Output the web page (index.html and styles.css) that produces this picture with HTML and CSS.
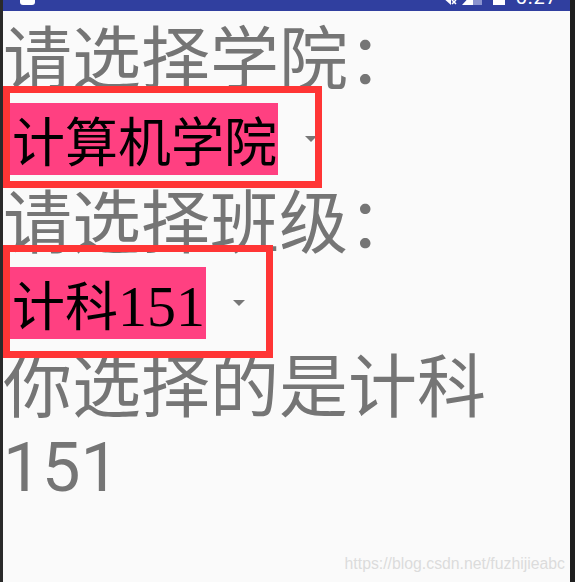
FILE: index.html
```html
<!DOCTYPE html>
<html lang="zh-CN">
<head>
<meta charset="utf-8">
<title>Spinner</title>
<link rel="stylesheet" href="styles.css">
</head>
<body>
<div class="device">
  <div class="edge edge-left"></div>
  <div class="screen">
    <div class="statusbar">
      <div class="status-row">
        <span class="notif"></span>
        <span class="status-spacer"></span>
        <svg class="ico-wifi" width="15" height="16" viewBox="0 0 15 16">
          <path d="M0 8 L9 16 L9 8 Z" fill="#fff"/>
          <path d="M10 11 L14 15 M14 11 L10 15" stroke="#fff" stroke-width="1.5"/>
        </svg>
        <svg class="ico-signal" width="20" height="16" viewBox="0 0 20 16">
          <path d="M0 16 L11 16 L11 4 Z" fill="#fff"/>
          <path d="M11 16 L20 16 L20 0 L11 4 Z" fill="#8a93cf"/>
        </svg>
        <span class="battery"></span>
        <span class="clock">5:27</span>
      </div>
    </div>
    <main class="content">
      <div class="label">请选择学院：</div>
      <div class="spinner-wrap">
        <div class="spinner">
          <span class="spinner-text">计算机学院</span>
          <span class="caret"></span>
        </div>
        <div class="mark mark-1"></div>
      </div>
      <div class="label">请选择班级：</div>
      <div class="spinner-wrap">
        <div class="spinner">
          <span class="spinner-text">计科<span class="num">151</span></span>
          <span class="caret"></span>
        </div>
        <div class="mark mark-2"></div>
      </div>
      <div class="label result">你选择的是计科151</div>
    </main>
    <div class="watermark">https://blog.csdn.net/fuzhijieabc</div>
  </div>
  <div class="edge edge-right"></div>
</div>
</body>
</html>
```
FILE: styles.css
```css
* { box-sizing: border-box; }
html, body {
  margin: 0;
  padding: 0;
  width: 575px;
  height: 582px;
  overflow: hidden;
  background: #fafafa;
}
.device {
  display: flex;
  width: 575px;
  height: 582px;
}
.edge { flex: none; height: 100%; }
.edge-left { width: 3px; background: #2a2a2a; }
.edge-right { width: 5px; background: #1f1f1f; }
.screen {
  position: relative;
  flex: 1;
  min-width: 0;
  background: #fafafa;
  display: flex;
  flex-direction: column;
}
.statusbar {
  height: 11px;
  background: #303f9f;
  overflow: hidden;
  flex: none;
}
.status-row {
  display: flex;
  align-items: flex-end;
  height: 16px;
  margin-top: -11px;
  padding: 0 12px 0 17px;
}
.notif {
  width: 15px;
  height: 14px;
  background: #fff;
  border-radius: 3px;
}
.status-spacer { flex: 1; }
.ico-wifi { display: block; margin-right: 5px; }
.ico-signal { display: block; margin-right: 11px; }
.battery {
  width: 12px;
  height: 14px;
  background: #fff;
  margin-right: 10px;
}
.clock {
  font-family: Roboto, sans-serif;
  font-size: 20px;
  line-height: 17px;
  height: 16px;
  color: #fff;
  letter-spacing: 1px;
}
.content {
  padding-top: 10px;
  display: flex;
  flex-direction: column;
}
.label {
  font-family: Roboto, "Noto Sans CJK SC", sans-serif;
  font-size: 69px;
  line-height: 79px;
  color: #757575;
  white-space: nowrap;
}
.label.result { white-space: normal; }
.spinner-wrap {
  position: relative;
  height: 85px;
}
.spinner {
  display: flex;
  align-items: center;
  padding: 3px 0 0 7px;
  height: 75px;
}
.spinner-text {
  font-family: "Noto Sans CJK SC", sans-serif;
  font-size: 53px;
  line-height: 72px;
  height: 72px;
  color: #000;
  background: #ff4081;
  padding: 0 1px 0 2px;
  white-space: nowrap;
}
.num {
  font-family: "Liberation Serif", serif;
  font-size: 58px;
}
.caret {
  width: 0;
  height: 0;
  margin-left: 27px;
  border-left: 6px solid transparent;
  border-right: 6px solid transparent;
  border-top: 6px solid #777;
}
.mark {
  position: absolute;
  left: 0;
  border: 7px solid #ff3535;
}
.mark-1 { top: -14px; width: 319px; height: 102px; }
.mark-2 { top: -19px; width: 270px; height: 113px; }
.watermark {
  position: absolute;
  right: 5px;
  bottom: 9px;
  font-family: "Liberation Sans", Arial, sans-serif;
  font-size: 15.8px;
  line-height: 18px;
  color: #dcdcdc;
}
```
